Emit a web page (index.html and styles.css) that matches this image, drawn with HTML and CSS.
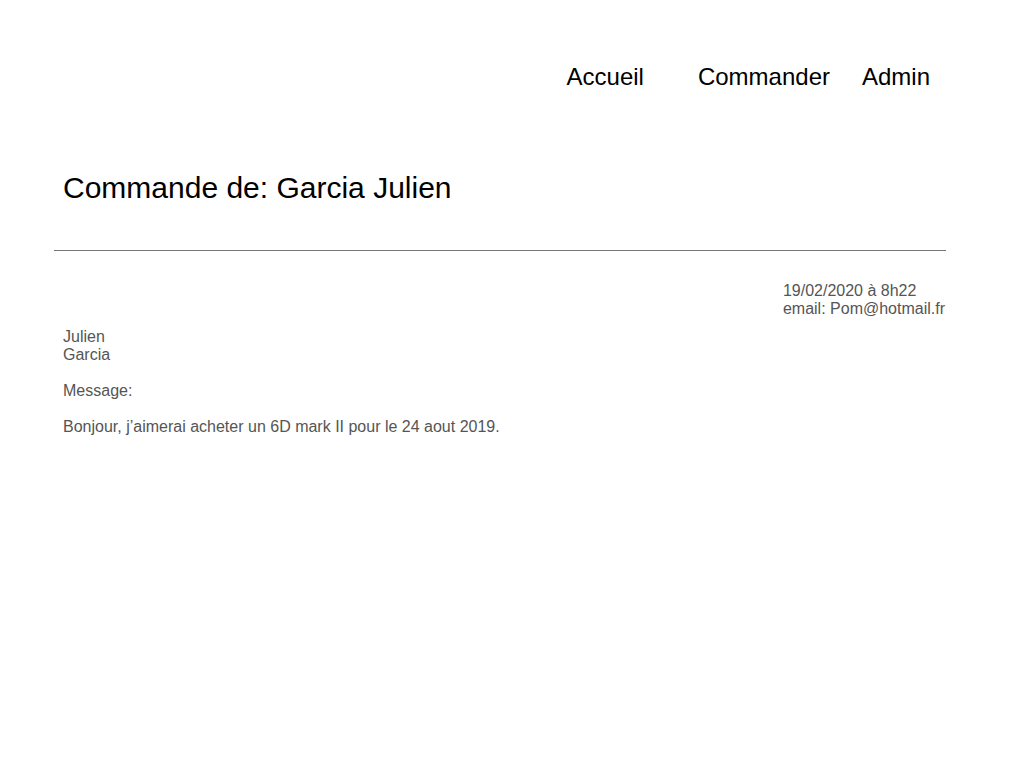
FILE: index.html
```html
<!DOCTYPE html>
<html lang="fr">
<head>
<meta charset="utf-8">
<title>Commande</title>
<link rel="stylesheet" href="styles.css">
</head>
<body>
<div class="page">
  <nav class="nav">
    <a class="nav-link nav-accueil" href="#">Accueil</a>
    <a class="nav-link nav-commander" href="#">Commander</a>
    <a class="nav-link" href="#">Admin</a>
  </nav>
  <h1 class="title">Commande de: Garcia Julien</h1>
  <hr class="rule">
  <div class="meta">
    <div>19/02/2020 à 8h22</div>
    <div>email: Pom@hotmail.fr</div>
  </div>
  <div class="details">
    Julien<br>
    Garcia<br>
    <br>
    Message:<br>
    <br>
    Bonjour, j’aimerai acheter un 6D mark II pour le 24 aout 2019.
  </div>
</div>
</body>
</html>
```

FILE: styles.css
```css
html, body {
  margin: 0;
  padding: 0;
  background: #fff;
}
body {
  font-family: "Liberation Sans", Arial, sans-serif;
}
.page {
  margin: 0 78px 0 54px;
  display: flex;
  flex-direction: column;
}
.nav {
  display: flex;
  justify-content: flex-end;
  padding: 63px 16px 0 0;
  font-size: 24px;
  line-height: 28px;
}
.nav-link {
  color: #000;
  text-decoration: none;
}
.nav-accueil {
  margin-right: 54px;
}
.nav-commander {
  margin-right: 32px;
}
.title {
  margin: 80px 0 0 9px;
  font-size: 30px;
  font-weight: normal;
  line-height: 34px;
  color: #000;
}
.rule {
  margin: 45px 0 0 0;
  border: 0;
  border-top: 1px solid #777;
  height: 0;
}
.meta {
  align-self: flex-end;
  margin-top: 31px;
  padding-right: 1px;
  font-size: 16px;
  line-height: 18px;
  color: #555;
  white-space: nowrap;
}
.details {
  margin: 10px 0 0 9px;
  font-size: 16px;
  line-height: 18px;
  color: #555;
}
```
